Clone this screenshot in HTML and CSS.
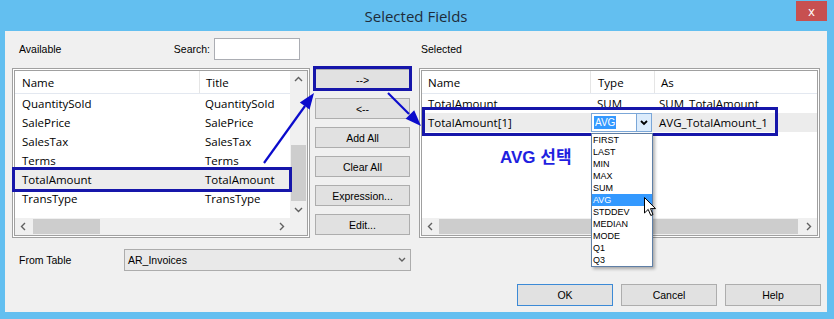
FILE: index.html
```html
<!DOCTYPE html>
<html lang="ko">
<head>
    <meta charset="UTF-8">
    <title>Selected Fields</title>
    <link rel="stylesheet" href="styles.css">
</head>
<body>

<div class="window">
    <div class="titlebar">
        <span class="title">Selected Fields</span>
        <span class="close">x</span>
    </div>

    <div class="panel">
        <div class="columns">
            <!-- 왼쪽: Available -->
            <div class="col-left">
                <div class="col-head">
                    <span>Available</span>
                    <span class="search"><span>Search:</span><span class="search-input"></span></span>
                </div>
                <div class="listbox">
                    <div class="lv">
                        <div class="lv-main">
                            <div class="lv-head">
                                <div class="cell c-name">Name</div>
                                <div class="cell">Title</div>
                            </div>
                            <div class="row"><div class="cell c-name">QuantitySold</div><div class="cell">QuantitySold</div></div>
                            <div class="row"><div class="cell c-name">SalePrice</div><div class="cell">SalePrice</div></div>
                            <div class="row"><div class="cell c-name">SalesTax</div><div class="cell">SalesTax</div></div>
                            <div class="row"><div class="cell c-name">Terms</div><div class="cell">Terms</div></div>
                            <div class="row sel"><div class="cell c-name">TotalAmount</div><div class="cell">TotalAmount</div></div>
                            <div class="row"><div class="cell c-name">TransType</div><div class="cell">TransType</div></div>
                        </div>
                        <div class="vscroll">
                            <div class="sb-btn"><svg width="17" height="17"><polyline points="5,10 8.5,6.5 12,10" /></svg></div>
                            <div class="track"><div class="vthumb"></div></div>
                            <div class="sb-btn"><svg width="17" height="17"><polyline points="5,7 8.5,10.5 12,7" /></svg></div>
                        </div>
                    </div>
                    <div class="hscroll-row">
                        <div class="hscroll">
                            <div class="sb-btn"><svg width="17" height="17"><polyline points="10,5 6.5,8.5 10,12" /></svg></div>
                            <div class="hthumb left-thumb"></div>
                            <div class="spacer"></div>
                            <div class="sb-btn"><svg width="17" height="17"><polyline points="7,5 10.5,8.5 7,12" /></svg></div>
                        </div>
                        <div class="corner"></div>
                    </div>
                </div>
            </div>

            <!-- 가운데 버튼 -->
            <div class="col-mid">
                <div class="btn">--&gt;</div>
                <div class="btn">&lt;--</div>
                <div class="btn">Add All</div>
                <div class="btn">Clear All</div>
                <div class="btn">Expression...</div>
                <div class="btn">Edit...</div>
            </div>

            <!-- 오른쪽: Selected -->
            <div class="col-right">
                <div class="col-head">
                    <span>Selected</span>
                </div>
                <div class="listbox">
                    <div class="lv">
                        <div class="lv-main">
                            <div class="lv-head">
                                <div class="cell r-name">Name</div>
                                <div class="cell r-type">Type</div>
                                <div class="cell">As</div>
                            </div>
                            <div class="row">
                                <div class="cell r-name">TotalAmount</div>
                                <div class="cell r-type">SUM</div>
                                <div class="cell">SUM_TotalAmount</div>
                            </div>
                            <div class="row sel">
                                <div class="cell r-name">TotalAmount[1]</div>
                                <div class="cell r-type cb-cell">
                                    <div class="cb">
                                        <div class="cb-text"><span class="hl">AVG</span></div>
                                        <div class="cb-btn"><svg width="14" height="17"><polyline points="4,7 7,10 10,7" /></svg></div>
                                    </div>
                                </div>
                                <div class="cell">AVG_TotalAmount_1</div>
                            </div>
                        </div>
                    </div>
                    <div class="hscroll-row">
                        <div class="hscroll">
                            <div class="sb-btn"><svg width="17" height="17"><polyline points="10,5 6.5,8.5 10,12" /></svg></div>
                            <div class="hthumb right-thumb"></div>
                            <div class="spacer"></div>
                            <div class="sb-btn"><svg width="17" height="17"><polyline points="7,5 10.5,8.5 7,12" /></svg></div>
                        </div>
                    </div>
                </div>
            </div>
        </div>

        <div class="from-row">
            <span class="from-label">From Table</span>
            <div class="combo">
                <span>AR_Invoices</span>
                <svg width="14" height="14"><polyline points="4,5 7,8 10,5" /></svg>
            </div>
        </div>

        <div class="bottom-row">
            <div class="btn wide default">OK</div>
            <div class="btn wide">Cancel</div>
            <div class="btn wide">Help</div>
        </div>

        <!-- 주석 표시 -->
        <div class="mark mark-add"></div>
        <div class="mark mark-left"></div>
        <div class="mark mark-right"></div>

        <div class="dropdown">
            <div class="dd-item">FIRST</div>
            <div class="dd-item">LAST</div>
            <div class="dd-item">MIN</div>
            <div class="dd-item">MAX</div>
            <div class="dd-item">SUM</div>
            <div class="dd-item active">AVG</div>
            <div class="dd-item">STDDEV</div>
            <div class="dd-item">MEDIAN</div>
            <div class="dd-item">MODE</div>
            <div class="dd-item">Q1</div>
            <div class="dd-item">Q3</div>
        </div>

        <div class="note">AVG 선택</div>

        <svg class="cursor" width="13" height="20" viewBox="0 0 13 20">
            <path d="M0.5,0.5 L0.5,16 L4.2,12.4 L6.8,18.5 L9,17.5 L6.5,11.6 L11.5,11.6 Z" />
        </svg>
    </div>

    <svg class="arrows" width="834" height="319">
        <line x1="264" y1="163" x2="305" y2="106" />
        <polygon points="314,93 309.6,109.5 299.8,102.5" />
        <line x1="388" y1="93" x2="409" y2="114" />
        <polygon points="421,126 405.6,118.7 414.2,110.3" />
    </svg>
</div>

</body>
</html>
```

FILE: styles.css
```css
body {
    margin: 0;
    font-family: "Liberation Sans", Arial, sans-serif;
    font-size: 10.5px;
    color: #000;
}
.window {
    position: relative;
    width: 834px;
    height: 319px;
    box-sizing: border-box;
    background: #63bff0;
    padding: 0 7px 7px 5px;
    display: flex;
    flex-direction: column;
}
.titlebar {
    height: 31px;
    flex: none;
    display: grid;
    grid-template-columns: 1fr auto 1fr;
    align-items: center;
}
.title {
    grid-column: 2;
    font-family: "Open Sans", sans-serif;
    font-size: 15px;
    color: #1e2c3a;
}
.close {
    grid-column: 3;
    justify-self: end;
    align-self: start;
    margin-top: 1px;
    width: 31px;
    height: 20px;
    background: #c75050;
    color: #fff;
    font-size: 13px;
    display: flex;
    align-items: center;
    justify-content: center;
}
.panel {
    position: relative;
    flex: 1;
    background: #f0f0f0;
    padding: 7px 6px 0 7px;
}
.columns {
    display: flex;
    height: 200px;
}
.col-left {
    width: 298px;
}
.col-head {
    height: 22px;
    display: flex;
    align-items: center;
}
.col-left .col-head {
    padding: 0 10px 0 7px;
}
.col-right .col-head {
    padding-left: 2px;
}
.search {
    margin-left: auto;
    display: flex;
    align-items: center;
    gap: 4px;
}
.search-input {
    width: 84px;
    height: 20px;
    background: #fff;
    border: 1px solid #abadb3;
}
.listbox {
    margin-top: 8px;
    height: 170px;
    box-sizing: border-box;
    border: 3px double #a0a0a0;
    background: #fff;
    display: flex;
    flex-direction: column;
    font-family: "Open Sans", sans-serif;
    font-size: 11.5px;
}
.lv {
    display: flex;
    height: 147px;
}
.lv-main {
    flex: 1;
    overflow: hidden;
}
.lv-head {
    height: 23px;
    box-sizing: border-box;
    display: flex;
    border-bottom: 1px solid #e3e8f0;
}
.row {
    height: 19px;
    display: flex;
}
.row.sel {
    background: #ececec;
}
.cell {
    flex: 1;
    padding-left: 6px;
    white-space: nowrap;
    overflow: hidden;
    display: flex;
    align-items: center;
}
.lv-head .cell + .cell {
    border-left: 1px solid #e5e5e5;
}
.cell.c-name {
    flex: none;
    width: 177px;
    padding-left: 7px;
}
.cell.r-name {
    flex: none;
    width: 162px;
    padding-left: 6px;
}
.cell.r-type {
    flex: none;
    width: 56px;
    padding-left: 7px;
}
.cell.cb-cell {
    padding: 0 1px;
    width: 61px;
}
.cb {
    width: 61px;
    height: 19px;
    box-sizing: border-box;
    border: 1px solid #7ba7d8;
    background: #fff;
    display: flex;
}
.cb-text {
    flex: 1;
    display: flex;
    align-items: center;
    padding-left: 2px;
    font-family: "Liberation Sans", Arial, sans-serif;
    font-size: 10px;
}
.hl {
    background: #3399ff;
    color: #fff;
    padding: 1px 1px;
}
.cb-btn {
    width: 14px;
    border-left: 1px solid #7ba7d8;
    background: #dcecfc;
}
.cb-btn polyline {
    fill: none;
    stroke: #000;
    stroke-width: 1.8;
}
.vscroll {
    width: 17px;
    background: #f0f0f0;
    display: flex;
    flex-direction: column;
}
.sb-btn {
    width: 17px;
    height: 17px;
    flex: none;
}
.sb-btn polyline, .combo polyline {
    fill: none;
    stroke: #606060;
    stroke-width: 1.4;
}
.track {
    flex: 1;
    display: flex;
    flex-direction: column;
    justify-content: flex-end;
}
.vthumb {
    height: 56px;
    margin: 0 1px;
    background: #cdcdcd;
}
.hscroll-row {
    display: flex;
    height: 17px;
}
.hscroll {
    flex: 1;
    display: flex;
    background: #f0f0f0;
}
.hthumb {
    margin: 1px 0;
    background: #cdcdcd;
}
.left-thumb {
    width: 67px;
    margin-left: 1px;
}
.right-thumb {
    width: 359px;
}
.spacer {
    flex: 1;
}
.corner {
    width: 17px;
    background: #f0f0f0;
}
.col-mid {
    width: 95px;
    margin-left: 5px;
    padding-top: 31px;
    display: flex;
    flex-direction: column;
    gap: 8px;
}
.btn {
    height: 21px;
    box-sizing: border-box;
    background: #e1e1e1;
    border: 1px solid #adadad;
    display: flex;
    align-items: center;
    justify-content: center;
}
.col-right {
    width: 401px;
    margin-left: 9px;
}
.from-row {
    margin-top: 11px;
    height: 22px;
    display: flex;
    align-items: center;
    padding-left: 7px;
}
.from-label {
    width: 105px;
}
.combo {
    width: 287px;
    height: 22px;
    box-sizing: border-box;
    border: 1px solid #acacac;
    background: #e9e9e9;
    display: flex;
    align-items: center;
    justify-content: space-between;
    padding: 0 1px 0 3px;
}
.bottom-row {
    margin-top: 13px;
    display: flex;
    justify-content: flex-end;
    gap: 8px;
}
.btn.wide {
    width: 96px;
    height: 22px;
}
.btn.default {
    border-color: #3c8ad6;
}
.mark {
    position: absolute;
    box-sizing: border-box;
    border: 3px solid #1616aa;
}
.mark-add {
    left: 308px;
    top: 35px;
    width: 99px;
    height: 25px;
}
.mark-left {
    left: 7px;
    top: 136px;
    width: 280px;
    height: 25px;
}
.mark-right {
    left: 417px;
    top: 76px;
    width: 356px;
    height: 29px;
}
.dropdown {
    position: absolute;
    left: 586px;
    top: 102px;
    width: 62px;
    box-sizing: border-box;
    border: 1px solid #5f7fa6;
    background: #fff;
    box-shadow: 2px 2px 3px rgba(0, 0, 0, 0.3);
}
.dd-item {
    height: 12px;
    line-height: 12px;
    padding-left: 1px;
    font-size: 9px;
}
.dd-item.active {
    background: #3399ff;
    color: #fff;
}
.note {
    position: absolute;
    left: 495px;
    top: 112px;
    font-family: "Liberation Sans", "Noto Sans CJK KR", sans-serif;
    font-weight: bold;
    font-size: 17px;
    color: #1f1fe0;
}
.cursor {
    position: absolute;
    left: 639px;
    top: 166px;
}
.cursor path {
    fill: #fff;
    stroke: #000;
    stroke-width: 1;
}
.arrows {
    position: absolute;
    left: 0;
    top: 0;
    pointer-events: none;
}
.arrows line {
    stroke: #0b0bcc;
    stroke-width: 2.2;
}
.arrows polygon {
    fill: #0b0bcc;
}
```
